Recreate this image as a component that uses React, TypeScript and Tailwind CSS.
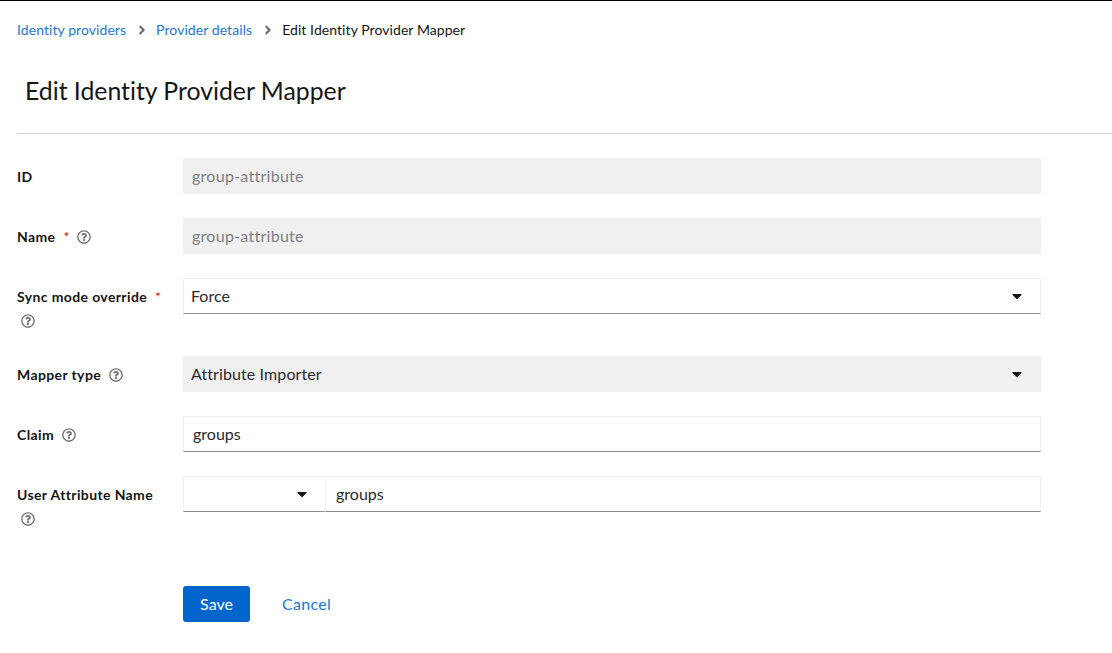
import React from 'react';
import { FaAngleRight, FaCaretDown, FaRegQuestionCircle } from 'react-icons/fa';

const Help = () => <FaRegQuestionCircle className="text-[#6a6e73] w-[14px] h-[14px] shrink-0" />;
const Req = () => <span className="text-[#c9190b] text-sm font-normal tracking-normal ml-[8px]">*</span>;
const Caret = () => <FaCaretDown className="text-[#151515] w-[16px] h-[16px]" />;

const Row: React.FC<{ label: React.ReactNode; children: React.ReactNode; tall?: boolean }> = ({ label, children, tall }) => (
  <div className={`flex ${tall ? 'h-[54px]' : 'h-[36px]'}`}>
    <div className="w-[166px] shrink-0 pt-[8px] text-sm leading-[21px] font-bold tracking-[0.38px] text-[#151515]">{label}</div>
    <div className="flex-1">{children}</div>
  </div>
);

const ReadOnly: React.FC<{ value: string }> = ({ value }) => (
  <div className="h-[36px] bg-[#f0f0f0] px-[9px] flex items-center tracking-[0.27px] text-[#7d8085]">{value}</div>
);

const Boxed: React.FC<{ children: React.ReactNode; className?: string }> = ({ children, className }) => (
  <div className={`h-[36px] flex items-center border border-[#f0f0f0] border-b-[#8a8d90] ${className ?? ''}`}>{children}</div>
);

export default function App() {
  return (
    <div className="min-h-[653px] bg-white border-t border-black font-['Lato',sans-serif] [font-variant-ligatures:none] text-base text-[#2a2a2a]">
      <nav className="flex items-center text-sm tracking-[0.07px] h-[21px] mt-[18px] ml-[17px]">
        <span className="text-[#1f78d1]">Identity providers</span>
        <FaAngleRight className="text-[#6a6e73] w-[12px] h-[14px] ml-[10px] mr-[8px]" />
        <span className="text-[#1f78d1]">Provider details</span>
        <FaAngleRight className="text-[#6a6e73] w-[12px] h-[14px] ml-[10px] mr-[8px]" />
        <span className="text-[#151515]">Edit Identity Provider Mapper</span>
      </nav>
      <h1 className="ml-[25px] mt-[35px] text-[24.8px] leading-[32px] text-[#151515]">Edit Identity Provider Mapper</h1>
      <div className="ml-[17px] mt-[26px] border-t border-[#d2d2d2]" />
      <form className="ml-[17px] mr-[71px] mt-[24px] flex flex-col gap-[24px]">
        <Row label="ID"><ReadOnly value="group-attribute" /></Row>
        <Row label={<span className="flex items-center">Name<Req /><span className="ml-[8px]"><Help /></span></span>}>
          <ReadOnly value="group-attribute" />
        </Row>
        <Row tall label={<><span>Sync mode override<Req /></span><div className="mt-[7px] ml-[4px]"><Help /></div></>}>
          <Boxed className="justify-between pl-[7px] pr-[15px]"><span>Force</span><Caret /></Boxed>
        </Row>
        <Row label={<span className="flex items-center">Mapper type<span className="ml-[8px]"><Help /></span></span>}>
          <div className="h-[36px] bg-[#f0f0f0] pl-[8px] pr-[16px] flex items-center justify-between"><span className="tracking-[0.1px]">Attribute Importer</span><Caret /></div>
        </Row>
        <Row label={<span className="flex items-center">Claim<span className="ml-[8px]"><Help /></span></span>}>
          <Boxed className="px-[9px]">groups</Boxed>
        </Row>
        <Row tall label={<><span>User Attribute Name</span><div className="mt-[7px] ml-[4px]"><Help /></div></>}>
          <div className="flex">
            <Boxed className="w-[143px] justify-end pr-[15px]"><Caret /></Boxed>
            <Boxed className="flex-1 border-l-0 pl-[10px]">groups</Boxed>
          </div>
        </Row>
        <div className="flex items-center mt-[32px] ml-[166px]">
          <button type="button" className="h-[36px] w-[67px] bg-[#0066cc] rounded-[3px] text-white">Save</button>
          <span className="ml-[32px] tracking-[0.3px] text-[#1f78d1]">Cancel</span>
        </div>
      </form>
    </div>
  );
}
